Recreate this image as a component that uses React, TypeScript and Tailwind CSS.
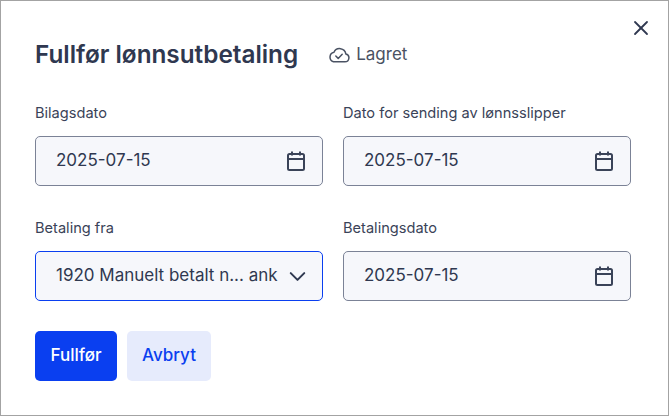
import { X, ChevronDown } from "lucide-react";

function CalendarIcon() {
  return (
    <svg viewBox="0 0 18 20" fill="none" stroke="#3a4358" strokeWidth="2" aria-hidden="true" className="w-[18px] h-5">
      <rect x="1" y="3" width="16" height="16" rx="1.5" />
      <path d="M1 8h16M5 0.5v4M13 0.5v4" />
    </svg>
  );
}

function CloudCheckIcon() {
  return (
    <svg viewBox="0 0 22 16" fill="none" stroke="#4a5263" strokeWidth="1.5" strokeLinecap="round" strokeLinejoin="round" aria-hidden="true" className="w-[22px] h-4">
      <path d="M5.5 14.8h11.4a4 4 0 0 0 .9-7.9 6.2 6.2 0 0 0-11.8-1.6A4.9 4.9 0 0 0 5.5 14.8Z" />
      <path d="M7.8 9l2.4 2.4 4-4.2" />
    </svg>
  );
}

function Field({ label, children }: { label: string; children: React.ReactNode }) {
  return (
    <div className="w-[288px]">
      <div className="h-[22px] text-[14.6px] leading-[22px] text-[#3a4358] mb-3">{label}</div>
      {children}
    </div>
  );
}

function DateInput({ value }: { value: string }) {
  return (
    <div className="h-[50px] flex items-center justify-between pl-5 pr-[17px] rounded-[5px] border border-[#7b8296] bg-[#f6f7fb] text-[17px] text-[#2f3850]">
      <span>{value}</span>
      <CalendarIcon />
    </div>
  );
}

export default function App() {
  return (
    <div className="relative w-[669px] h-[416px] bg-white border border-[#a3a3a3] pl-[34px] pt-[37px] font-['Inter',sans-serif]">
      <button className="absolute top-[15px] right-[15px] text-[#2f3850]" aria-label="Lukk">
        <X className="w-6 h-6" strokeWidth={1.8} />
      </button>

      <div className="flex items-center h-[33px]">
        <h2 className="text-[24.3px] font-semibold text-[#2f3850]">Fullfør lønnsutbetaling</h2>
        <div className="ml-[30px] flex items-center gap-[6px] text-[17px] text-[#4a5263]">
          <CloudCheckIcon />
          <span>Lagret</span>
        </div>
      </div>

      <div className="mt-[31px] grid grid-cols-[288px_288px] gap-x-5 gap-y-[31px]">
        <Field label="Bilagsdato">
          <DateInput value="2025-07-15" />
        </Field>
        <Field label="Dato for sending av lønnsslipper">
          <DateInput value="2025-07-15" />
        </Field>
        <Field label="Betaling fra">
          <div className="h-[50px] flex items-center justify-between pl-5 pr-[11px] rounded-[5px] border border-[#0a3ff0] bg-[#f6f7fb] text-[17px] text-[#2f3850]">
            <span>1920 Manuelt betalt n... ank</span>
            <ChevronDown className="w-[27px] h-[27px]" strokeWidth={1.8} />
          </div>
        </Field>
        <Field label="Betalingsdato">
          <DateInput value="2025-07-15" />
        </Field>
      </div>

      <div className="mt-[30px] flex gap-[10px]">
        <button className="h-[50px] w-[82px] rounded-[5px] bg-[#0a3ff0] text-white text-[17px] font-medium">Fullfør</button>
        <button className="h-[50px] w-[84px] rounded-[5px] bg-[#e6ebfc] text-[#0a3ff0] text-[17px] font-medium">Avbryt</button>
      </div>
    </div>
  );
}
